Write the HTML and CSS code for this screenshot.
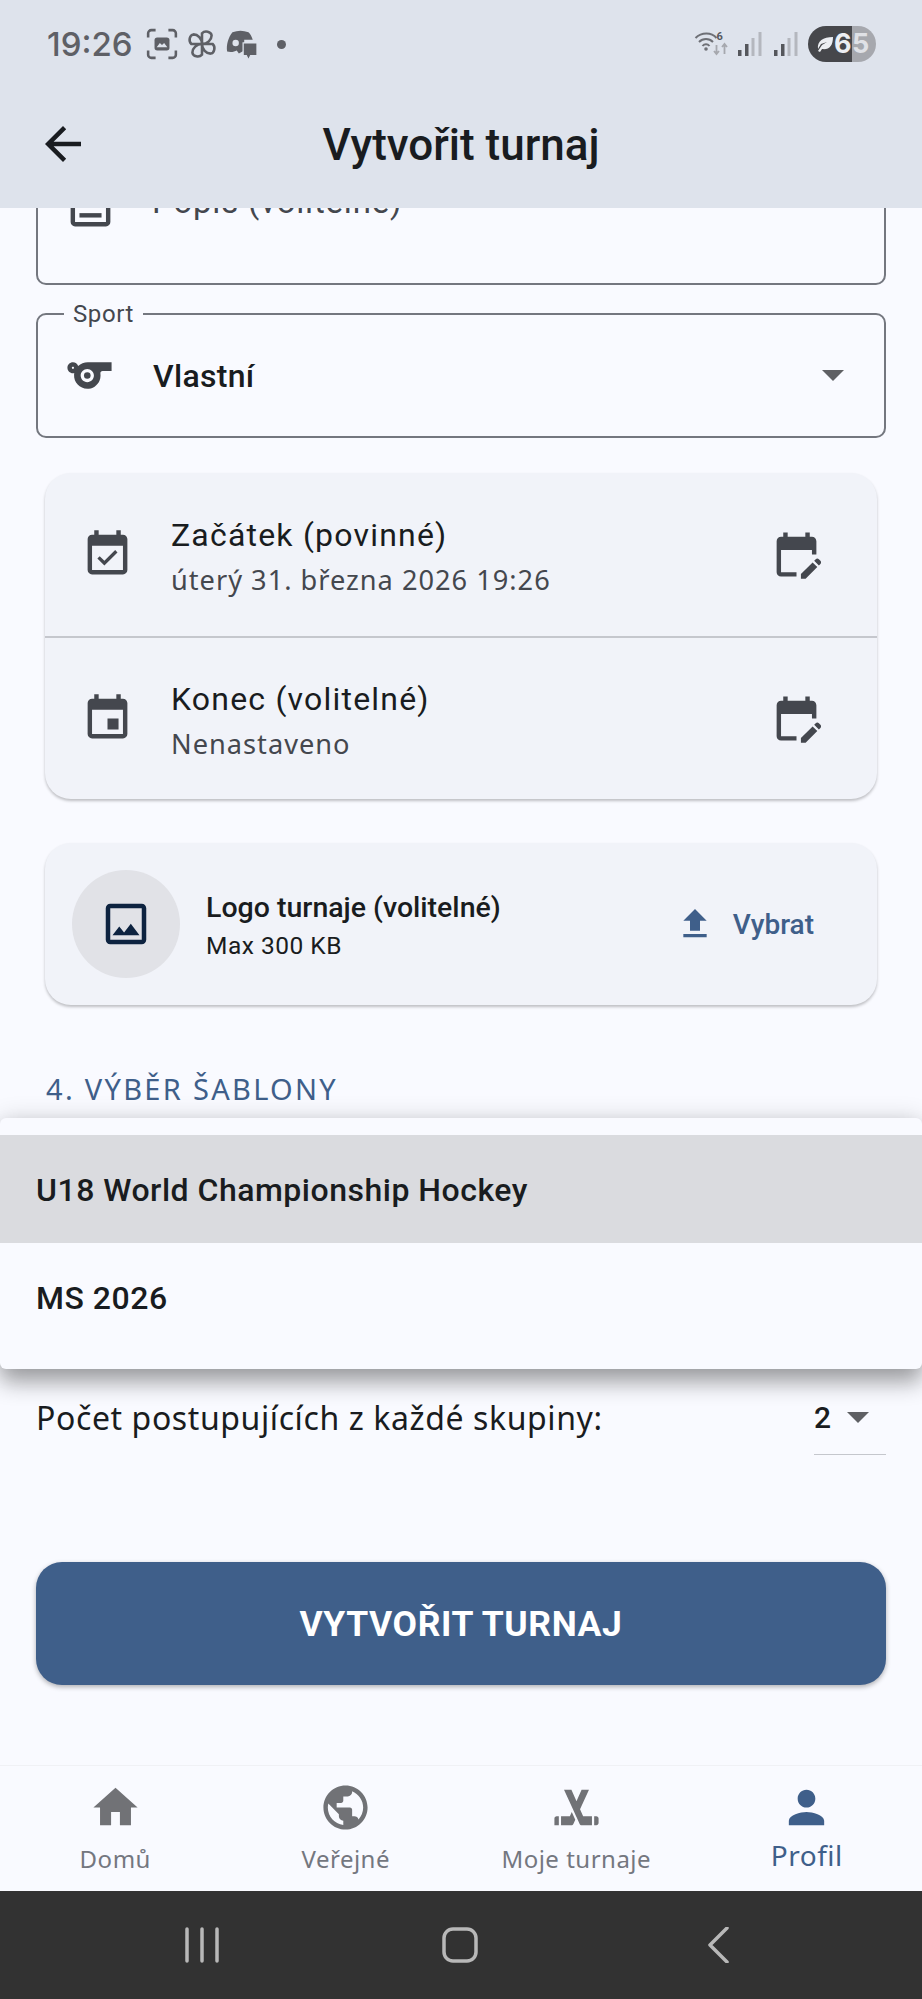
FILE: index.html
```html
<!DOCTYPE html>
<html lang="cs">
<head>
<meta charset="utf-8">
<title>Vytvořit turnaj</title>
<link rel="stylesheet" href="styles.css">
</head>
<body>
<div class="app">
  <header class="top">
    <div class="status">
      <span class="time">19:26</span>
      <svg class="st-ic" viewBox="0 0 30 30" fill="none" stroke="#5e6066" stroke-width="2.4"><path d="M2 9V5a3 3 0 0 1 3-3h4M21 2h4a3 3 0 0 1 3 3v4M28 21v4a3 3 0 0 1-3 3h-4M9 28H5a3 3 0 0 1-3-3v-4"/><rect x="8" y="9" width="14" height="12" rx="2.5" fill="#5e6066" stroke="none"/><path d="M10 18l3-4 2 2 2-2 3 4z" fill="#dee3ec" stroke="none"/></svg>
      <svg class="st-ic" viewBox="0 0 30 30" fill="none" stroke="#5e6066" stroke-width="2.4"><path d="M15 15V5a5 4 0 0 1 9 2c0 4-4 8-9 8zM15 15h10a4 5 0 0 1-2 9c-4 0-8-4-8-9zM15 15v10a5 4 0 0 1-9-2c0-4 4-8 9-8zM15 15H5a4 5 0 0 1 2-9c4 0 8 4 8 9z"/></svg>
      <svg class="st-ic st-game" viewBox="0 0 30 30"><path d="M7 4c5-2 10-2 15 0 2 2 3 4 4 7H18v10l-5 3-2-3c-2 1-5 2-9 1C1 16 3 9 7 4z" fill="#5e6066"/><circle cx="10" cy="14" r="3" fill="#dee3ec"/><path d="M17 14h13v12h-6l-2 4-2-4h-3z" fill="#5e6066" stroke="#dee3ec" stroke-width="1.200"/></svg>
      <span class="st-dot"></span>
      <span class="st-space"></span>
      <svg class="st-wifi" viewBox="0 0 34 26"><g fill="none" stroke="#6e7076" stroke-width="2"><path d="M1 7c6-6 16-6 21 0M4.500 11c4-4 10-4 14 0M8 15c2-2.500 5-2.500 7 0"/></g><circle cx="11.500" cy="18" r="1.800" fill="#6e7076"/><text x="22" y="9" class="wifi-six">6</text><path d="M22 14v9M19.500 20l2.500 3 2.500-3" fill="none" stroke="#a6a8ae" stroke-width="1.800"/><path d="M30 23v-10M27.500 16l2.500-3 2.500 3" fill="none" stroke="#a6a8ae" stroke-width="1.800"/></svg>
      <svg class="st-sig" viewBox="0 0 24 26"><rect x="0" y="19" width="3.500" height="6" fill="#55575c"/><rect x="7" y="13" width="3.500" height="12" fill="#55575c"/><rect x="13.500" y="7" width="3" height="18" fill="#b4b7be"/><rect x="20.500" y="1" width="3" height="24" fill="#b4b7be"/></svg>
      <svg class="st-sig" viewBox="0 0 24 26"><rect x="0" y="19" width="3.500" height="6" fill="#55575c"/><rect x="7" y="13" width="3.500" height="12" fill="#55575c"/><rect x="13.500" y="7" width="3" height="18" fill="#b4b7be"/><rect x="20.500" y="1" width="3" height="24" fill="#b4b7be"/></svg>
      <div class="batt">
        <span class="batt-fill">
          <svg class="leaf" viewBox="0 0 20 20"><path d="M3 15C2 7 8 3 18 3c0 9-4 13-11 12l-2 3-2-1 4-6 5-3-6 2z" fill="#eceef2"/></svg>
          <span class="b6">6</span>
        </span>
        <span class="batt-rest">5</span>
      </div>
    </div>
    <div class="appbar">
      <svg class="back" viewBox="0 0 24 24"><path d="M20 11H7.830l5.590-5.590L12 4l-8 8 8 8 1.410-1.410L7.830 13H20v-2z"/></svg>
      <h1>Vytvořit turnaj</h1>
    </div>
  </header>

  <main class="main">
    <div class="scroll">
      <div class="field field-desc">
        <svg class="field-ic" viewBox="0 0 24 24"><path d="M19 5v14H5V5h14m0-2H5c-1.100 0-2 .9-2 2v14c0 1.100.9 2 2 2h14c1.100 0 2-.9 2-2V5c0-1.100-.9-2-2-2z"/><path d="M7 15h10v2H7z"/></svg>
        <span class="field-hint">Popis (volitelné)</span>
      </div>

      <div class="field field-sport">
        <span class="field-label">Sport</span>
        <svg class="field-ic" viewBox="0 0 24 24"><path d="M11.230 6c-1.660 0-3.220.66-4.360 1.730C6.540 6.730 5.610 6 4.500 6 3.120 6 2 7.120 2 8.500S3.120 11 4.500 11c.21 0 .41-.03.61-.08-.05.25-.09.51-.1.78-.18 3.680 2.950 6.680 6.680 6.270 2.550-.28 4.680-2.260 5.190-4.770.15-.71.15-1.400.06-2.060-.09-.6.38-1.130.99-1.130H22V6H11.230zM4.500 9c-.28 0-.5-.22-.5-.5s.22-.5.5-.5.5.22.5.5-.22.5-.5.5zm6.500 6c-1.660 0-3-1.340-3-3s1.340-3 3-3 3 1.340 3 3-1.340 3-3 3z"/><circle cx="11" cy="12" r="1.500" /></svg>
        <span class="field-value">Vlastní</span>
        <span class="caret caret-lg"></span>
      </div>

      <section class="card card-dates">
        <div class="date-row">
          <svg class="date-ic" viewBox="0 0 24 24"><path d="M16.530 11.060L15.470 10l-4.880 4.880-2.120-2.120-1.060 1.060L10.590 17l5.940-5.940zM19 3h-1V1h-2v2H8V1H6v2H5c-1.110 0-1.990.9-1.990 2L3 19c0 1.100.89 2 2 2h14c1.100 0 2-.9 2-2V5c0-1.100-.9-2-2-2zm0 16H5V8h14v11z"/></svg>
          <div class="date-text">
            <div class="date-title">Začátek (povinné)</div>
            <div class="date-sub">úterý 31. března 2026 19:26</div>
          </div>
          <svg class="date-ic" viewBox="0 0 24 24"><path d="M5 10h14v2h2V6c0-1.100-.9-2-2-2h-1V2h-2v2H8V2H6v2H5c-1.110 0-1.990.9-1.990 2L3 20c0 1.100.89 2 2 2h7v-2H5V10zM22.840 16.280l-.71.71-2.120-2.120.71-.71c.39-.39 1.020-.39 1.410 0l.71.71c.39.39.39 1.020 0 1.410zM19.300 15.580l2.120 2.120-5.300 5.300H14v-2.120l5.300-5.300z"/></svg>
        </div>
        <div class="date-row date-row-end">
          <svg class="date-ic" viewBox="0 0 24 24"><path d="M17 12h-5v5h5v-5zM16 1v2H8V1H6v2H5c-1.110 0-1.990.9-1.990 2L3 19c0 1.100.89 2 2 2h14c1.100 0 2-.9 2-2V5c0-1.100-.9-2-2-2h-1V1h-2zm3 18H5V8h14v11z"/></svg>
          <div class="date-text">
            <div class="date-title">Konec (volitelné)</div>
            <div class="date-sub">Nenastaveno</div>
          </div>
          <svg class="date-ic" viewBox="0 0 24 24"><path d="M5 10h14v2h2V6c0-1.100-.9-2-2-2h-1V2h-2v2H8V2H6v2H5c-1.110 0-1.990.9-1.990 2L3 20c0 1.100.89 2 2 2h7v-2H5V10zM22.840 16.280l-.71.71-2.120-2.120.71-.71c.39-.39 1.020-.39 1.410 0l.71.71c.39.39.39 1.020 0 1.410zM19.300 15.580l2.120 2.120-5.300 5.300H14v-2.120l5.300-5.300z"/></svg>
        </div>
      </section>

      <section class="card card-logo">
        <div class="logo-circle">
          <svg class="logo-ic" viewBox="0 0 24 24"><path d="M19 5v14H5V5h14m0-2H5c-1.100 0-2 .9-2 2v14c0 1.100.9 2 2 2h14c1.100 0 2-.9 2-2V5c0-1.100-.9-2-2-2zm-4.860 8.860l-3 3.870L9 13.140 6 17h12l-3.860-5.140z"/></svg>
        </div>
        <div class="logo-text">
          <div class="logo-title">Logo turnaje (volitelné)</div>
          <div class="logo-sub">Max 300 KB</div>
        </div>
        <div class="pick">
          <svg class="pick-ic" viewBox="0 0 24 24"><path d="M5 20h14v-2H5v2zm0-10h4v6h6v-6h4l-7-7-7 7z"/></svg>
          <span>Vybrat</span>
        </div>
      </section>

      <h2 class="section">4. VÝBĚR ŠABLONY</h2>

      <div class="advance">
        <span class="advance-label">Počet postupujících z každé skupiny:</span>
        <div class="select-mini"><span class="select-val">2</span><span class="caret"></span></div>
      </div>

      <button class="cta">VYTVOŘIT TURNAJ</button>
    </div>

    <div class="menu">
      <div class="menu-item menu-item-on">U18 World Championship Hockey</div>
      <div class="menu-item">MS 2026</div>
    </div>
  </main>

  <nav class="nav">
    <div class="nav-item">
      <svg class="nav-ic" viewBox="0 0 24 24"><path d="M10 20v-6h4v6h5v-8h3L12 3 2 12h3v8z"/></svg>
      <span class="nav-label">Domů</span>
    </div>
    <div class="nav-item">
      <svg class="nav-ic" viewBox="0 0 24 24"><path d="M12 2C6.480 2 2 6.480 2 12s4.480 10 10 10 10-4.480 10-10S17.520 2 12 2zm-1 17.930c-3.950-.49-7-3.850-7-7.930 0-.62.08-1.210.21-1.790L9 15v1c0 1.100.9 2 2 2v1.930zm6.900-2.540c-.26-.81-1-1.390-1.900-1.390h-1v-3c0-.55-.45-1-1-1H8v-2h2c.55 0 1-.45 1-1V7h2c1.100 0 2-.9 2-2v-.41c2.930 1.190 5 4.060 5 7.410 0 2.080-.8 3.970-2.100 5.390z"/></svg>
      <span class="nav-label">Veřejné</span>
    </div>
    <div class="nav-item">
      <svg class="nav-ic" viewBox="0 0 24 24"><path d="M2 17v3h2v-4H3c-.55 0-1 .45-1 1zM9 16H5v4l4.690-.01c.38 0 .72-.21.89-.55l.87-1.900-1.590-3.480L9 16zM21.710 16.290c-.18-.18-.43-.29-.71-.29h-1v4h1c.55 0 1-.45 1-1v-2c0-.28-.11-.53-.29-.71zM13.600 12.840L17.650 4H14.300l-1.760 3.970-.49 1.100-.05.14L9.700 4H6.350l4.050 8.840 1.520 3.320.08.18 1.420 3.100c.17.34.51.55.89.55L19 20v-4h-4l-1.400-3.160z"/></svg>
      <span class="nav-label">Moje turnaje</span>
    </div>
    <div class="nav-item nav-item-on">
      <svg class="nav-ic" viewBox="0 0 24 24"><path d="M12 12c2.210 0 4-1.790 4-4s-1.790-4-4-4-4 1.790-4 4 1.790 4 4 4zm0 2c-2.670 0-8 1.340-8 4v2h16v-2c0-2.660-5.330-4-8-4z"/></svg>
      <span class="nav-label">Profil</span>
    </div>
  </nav>

  <footer class="sys">
    <svg class="sys-ic sys-recents" viewBox="0 0 36 36"><path d="M3 2v32M18 2v32M33 2v32"/></svg>
    <svg class="sys-ic" viewBox="0 0 36 36"><rect x="2" y="2" width="32" height="32" rx="9"/></svg>
    <svg class="sys-ic" viewBox="0 0 36 36"><path d="M27 1L10 18l17 17"/></svg>
  </footer>
</div>
</body>
</html>
```

FILE: styles.css
```css
* { box-sizing: border-box; }
html, body { margin: 0; padding: 0; }
body { background: #f9faff; font-family: "Roboto", sans-serif; color: #191c20; }

.app { width: 922px; height: 1999px; display: flex; flex-direction: column; overflow: hidden; }

/* Header */
.top { height: 208px; background: #dee3ec; flex: none; position: relative; z-index: 3; }
.status { height: 88px; display: flex; align-items: center; padding: 0 46px 0 47px; }
.time { font-family: "Inter", "Roboto", sans-serif; font-size: 33px; font-weight: 500; color: #5e6066; margin-right: 13px; }
.st-ic { width: 32px; height: 32px; margin-right: 8px; }
.st-game { margin-left: -1px; }
.st-dot { width: 9px; height: 9px; border-radius: 50%; background: #5e6066; margin-left: 12px; }
.st-space { flex: 1; }
.st-wifi { width: 35px; height: 26px; margin-right: 9px; }
.wifi-six { font-family: "Roboto", sans-serif; font-size: 11px; font-weight: 700; fill: #55575c; }
.st-sig { width: 24px; height: 26px; margin-right: 12px; }
.batt { width: 68px; height: 36px; border-radius: 18px; overflow: hidden; display: flex; margin-left: -2px; font-family: "Inter", "Roboto", sans-serif; font-size: 27px; font-weight: 700; line-height: 36px; }
.batt-fill { width: 44px; background: #46474b; color: #eceef2; display: flex; align-items: center; padding-left: 7px; }
.leaf { width: 20px; height: 20px; flex: none; }
.b6 { margin-left: -1px; }
.batt-rest { flex: 1; background: #a6a8ae; color: #dfe1e6; }

.appbar { height: 120px; display: flex; align-items: center; justify-content: center; position: relative; }
.back { position: absolute; left: 36px; top: 29px; width: 54px; height: 54px; fill: #191c20; }
h1 { margin: -6px 0 0; font-size: 44px; font-weight: 500; color: #191c20; }

/* Scrolled content */
.main { flex: 1; position: relative; overflow: hidden; background: #f9faff; }
.scroll { margin-top: -60px; padding: 0 36px; display: flex; flex-direction: column; }

.field { position: relative; border: 2px solid #74777f; border-radius: 10px; display: flex; align-items: center; background: #f9faff; }
.field-desc { height: 137px; align-items: flex-start; padding: 30px 0 0 26px; }
.field-ic { width: 53px; height: 53px; fill: #44474e; flex: none; }
.field-hint { margin-left: 35px; margin-top: -5px; font-size: 33px; letter-spacing: .8px; color: #44474e; line-height: 53px; }
.field-sport { height: 125px; margin-top: 28px; padding: 0 40px 0 25px; }
.field-label { position: absolute; left: 26px; top: -15px; padding: 0 9px; background: #f9faff; font-size: 24px; letter-spacing: .6px; line-height: 28px; color: #44474e; }
.field-value { margin-left: 37px; flex: 1; font-size: 32px; font-weight: 500; letter-spacing: .3px; color: #191c20; }

.caret { display: inline-block; width: 0; height: 0; border-left: 11px solid transparent; border-right: 11px solid transparent; border-top: 11px solid #5f6064; }

.card { margin: 0 9px; background: #f1f3f9; border-radius: 26px; box-shadow: 0 2px 3px rgba(0, 0, 0, .24); }
.card-dates { margin-top: 35px; height: 326px; display: flex; flex-direction: column; }
.date-row { height: 165px; display: flex; align-items: center; padding: 0 54px 0 36px; border-bottom: 2px solid #c5c7cd; }
.date-row-end { height: 161px; border-bottom: 0; }
.date-ic { width: 53px; height: 53px; fill: #44474e; flex: none; }
.date-text { flex: 1; margin-left: 37px; }
.date-title { font-size: 32px; letter-spacing: 1.200px; line-height: 36px; color: #191c20; margin-top: 6px; }
.date-sub { margin-top: 9px; font-family: "Noto Sans", sans-serif; font-size: 27.200px; letter-spacing: 1px; line-height: 36px; color: #44474e; }
.date-row-end .date-title { margin-top: 6px; }

.card-logo { margin-top: 44px; height: 162px; display: flex; align-items: center; padding: 0 63px 0 27px; }
.logo-circle { width: 108px; height: 108px; border-radius: 50%; background: #e1e2e7; display: flex; align-items: center; justify-content: center; flex: none; }
.logo-ic { width: 54px; height: 54px; fill: #0d2340; }
.logo-text { flex: 1; margin-left: 26px; padding-top: 2px; }
.logo-title { font-size: 28.500px; font-weight: 500; line-height: 36px; color: #191c20; }
.logo-sub { margin-top: 5px; font-size: 24.500px; letter-spacing: .5px; line-height: 30px; color: #191c20; }
.pick { display: flex; align-items: center; gap: 18px; font-size: 28px; font-weight: 500; color: #3f5f8a; }
.pick-ic { width: 40px; height: 40px; fill: #3f5f8a; }

.section { margin: 62px 0 0 10px; font-family: "Noto Sans", sans-serif; font-size: 29px; font-weight: 400; letter-spacing: 2.300px; line-height: 44px; color: #3f5f8a; }

.advance { margin-top: 285px; height: 86px; display: flex; align-items: flex-start; justify-content: space-between; }
.advance-label { font-family: "Noto Sans", sans-serif; font-size: 32px; letter-spacing: .6px; line-height: 44px; color: #191c20; }
.select-mini { width: 72px; height: 59px; border-bottom: 1px solid #c5c7cd; display: flex; align-items: flex-start; gap: 16px; line-height: 44px; font-size: 30px; font-weight: 500; }
.select-mini .caret { margin-top: 16px; }

.cta { margin-top: 80px; height: 123px; border: 0; border-radius: 26px; background: #3f5f8a; color: #fff; font-family: "Roboto", sans-serif; font-size: 35.500px; font-weight: 700; letter-spacing: .6px; box-shadow: 0 2px 5px rgba(0, 0, 0, .3); }

/* Dropdown overlay */
.menu { position: absolute; left: 0; right: 0; top: 910px; height: 251px; padding: 17px 0 0; background: #f9faff; border-radius: 6px; box-shadow: 0 14px 22px rgba(0, 0, 0, .32), 0 0 24px rgba(0, 0, 0, .14); }
.menu-item { height: 108px; display: flex; align-items: center; padding: 2px 0 0 36px; font-size: 32px; font-weight: 500; letter-spacing: .5px; color: #191c20; }
.menu-item-on { background: #dadbdf; }

/* Bottom nav */
.nav { height: 126px; flex: none; display: grid; grid-template-columns: repeat(4, 1fr); background: #f9faff; border-top: 1px solid #f0f1f5; }
.nav-item { display: flex; flex-direction: column; align-items: center; padding-top: 15px; }
.nav-ic { width: 53px; height: 53px; fill: #717276; flex: none; }
.nav-label { margin-top: 8px; font-family: "Noto Sans", sans-serif; font-size: 24px; letter-spacing: .5px; line-height: 34px; color: #74777f; }
.nav-item-on .nav-ic { fill: #3f5f8a; }
.nav-item-on .nav-label { margin-top: 1px; font-size: 28px; color: #3f5f8a; line-height: 40px; }

/* System bar */
.sys { height: 108px; flex: none; background: #323232; display: grid; grid-template-columns: repeat(3, 1fr); padding: 0 75px 0 73px; align-items: center; justify-items: center; }
.sys-ic { width: 36px; height: 36px; fill: none; stroke: #b8b8b8; stroke-width: 3.5; stroke-linecap: round; stroke-linejoin: round; }
```
